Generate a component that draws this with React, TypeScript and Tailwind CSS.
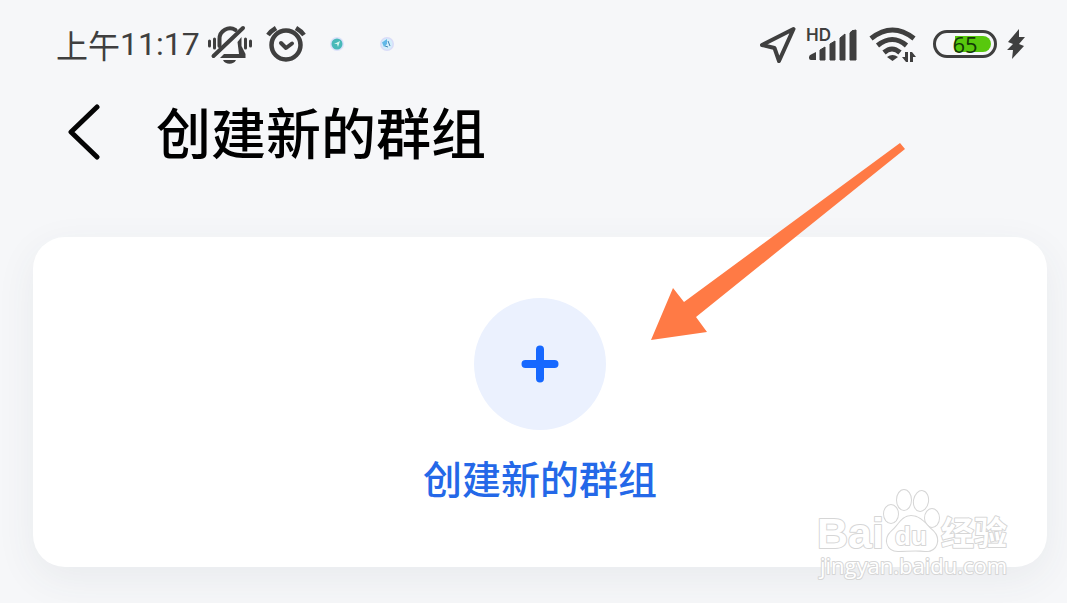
const cjk = "font-['Noto_Sans_CJK_SC','Noto_Sans',sans-serif]";

const BellOffIcon = () => (
  <svg viewBox="0 0 46 42" className="h-[42px] w-[46px]" fill="none" stroke="#3f3f3f" strokeLinecap="round">
    <path d="M1.500 18v5M6.500 16v9M37.500 16v9M42.500 18v5" strokeWidth="3" />
    <path d="M11.500 23v-7a10.500 10.500 0 0 1 16-9" strokeWidth="4" />
    <path d="M29.500 19l4-5v9l4 8v4H12l4-4h15z" fill="#3f3f3f" stroke="none" />
    <path d="M15 37h13c-2 5-11 5-13 0z" fill="#3f3f3f" stroke="none" />
    <path d="M35 5 5.500 33" strokeWidth="4" />
  </svg>
);

const AlarmIcon = () => (
  <svg viewBox="0 0 40 38" className="h-[38px] w-10" fill="none" stroke="#3f3f3f" strokeLinecap="round" strokeLinejoin="round">
    <circle cx="20" cy="20" r="14.500" strokeWidth="4.500" />
    <path d="m15 18 5 5 6-4.500" strokeWidth="4" />
    <path d="m2 10q3-4 8-7M38 10q-3-4-8-7" strokeWidth="4.500" strokeLinecap="butt" />
  </svg>
);

const AppDots = () => (
  <div className="flex gap-9">
    <svg viewBox="0 0 14 14" className="size-3.5">
      <circle cx="7" cy="7" r="7" fill="#dbe1fa" />
      <circle cx="7" cy="7" r="5.500" fill="#48b9b9" />
      <path d="m4 7 6-3-2 6-1-3z" fill="#d5f5ee" />
    </svg>
    <svg viewBox="0 0 14 14" className="size-3.5">
      <circle cx="7" cy="7" r="7" fill="#d9dcf8" />
      <circle cx="7" cy="7" r="5.500" fill="#d4eefb" />
      <path d="M2 5.500 7 2v5L4 10z" fill="#62b8e8" />
      <path d="m8 4 2 5M5 9l3 1" stroke="#4285b8" />
    </svg>
  </div>
);

const LocationIcon = () => (
  <svg viewBox="0 0 38 38" className="size-[38px]" fill="none" stroke="#3f3f3f" strokeWidth="4" strokeLinejoin="round">
    <path d="M34.500 4 3 20l12.500 3L20 36z" />
  </svg>
);

const SignalIcon = () => (
  <svg viewBox="0 0 52 38" className="h-[38px] w-[52px] overflow-visible" fill="#3f3f3f">
    <text x="1" y="16" fontSize="17" fontWeight="600" fontFamily="Inter, sans-serif">HD</text>
    <path d="M4 32q0-2 3-3l4-2v8H6q-2 0-2-2z" />
    <path d="m15 25 5-3v13h-5zM25 19l5-3v19h-5zM35 13l5-4v26h-5zM45 8q1-3 6-3v30h-6z" stroke="#3f3f3f" strokeWidth="1" strokeLinejoin="round" />
  </svg>
);

const WifiIcon = () => (
  <svg viewBox="0 0 48 38" className="h-[38px] w-12" fill="none" stroke="#3f3f3f" strokeWidth="5">
    <path d="M2 13.500q21.500-17 43 0M8.500 20.500q15-12 29 0M15 27.500q8-7 16 0" />
    <path d="M18 32q5.500-4 11 0l-5.500 4z" fill="#3f3f3f" stroke="none" />
    <path d="M36 27h3v10h-2l-4-5h3zM41 37h3v-5h3l-4-5h-2z" fill="#3f3f3f" stroke="none" />
  </svg>
);

const Battery = () => (
  <div className="relative flex h-7 w-16 items-center rounded-full border-3 border-[#3f3f3f] p-[3px]">
    <div className="ml-auto h-full w-9 rounded-r-full bg-[#58c80d]" />
    <span className="absolute inset-0 flex items-center justify-center font-['Open_Sans',sans-serif] text-[22px] leading-5 text-[#123808]">
      65
    </span>
  </div>
);

const ArrowPointer = () => (
  <svg
    viewBox="0 0 256 198"
    className="pointer-events-none absolute right-[140px] bottom-[227px] h-[198px] w-[256px]"
    fill="#ff7a45"
  >
    <path d="M249 1 33 160 22 146 0 198l56-8-11-15L254 7z" />
  </svg>
);

const Watermark = () => (
  <svg
    viewBox="0 0 200 100"
    className="pointer-events-none absolute right-[34px] -bottom-[16px] h-[100px] w-[200px]"
    fill="#fff"
    stroke="#d6d6d6"
    strokeWidth="2"
    strokeLinejoin="round"
    paintOrder="stroke"
  >
    <g fontFamily="'Liberation Sans', 'Noto Sans CJK SC', sans-serif" fontWeight="700">
      <text x="4" y="65" fontSize="43">Bai</text>
      <text x="128" y="62" fontSize="33" fontFamily="'Noto Sans CJK SC', sans-serif">经验</text>
    </g>
    <ellipse cx="78" cy="31" rx="7" ry="9" />
    <ellipse cx="91" cy="17" rx="7" ry="10" />
    <ellipse cx="108" cy="18" rx="7" ry="10" transform="rotate(10 108 18)" />
    <ellipse cx="119" cy="35" rx="7" ry="9" />
    <path d="M98 33c-9 0-12 9-19 15-9 8-5 20 6 20 9 0 17-1 27 0 12 1 16-12 8-20-7-6-12-15-22-15z" />
    <text x="82" y="62" fontSize="26" fontWeight="700" fontFamily="'Liberation Sans', sans-serif">du</text>
    <text x="7" y="91" fontSize="22" fontFamily="'Open Sans', sans-serif">jingyan.baidu.com</text>
  </svg>
);

const StatusBar = () => (
  <div className="flex h-[88px] items-center justify-between pr-10 pl-14 text-[#3f3f3f]">
    <div className="flex items-center">
      <span className="mr-2 flex items-center text-[32px] leading-10">
        上午<span className="font-['Roboto',sans-serif]">11:17</span>
      </span>
      <BellOffIcon />
      <div className="mr-6 ml-3 flex">
        <AlarmIcon />
      </div>
      <AppDots />
    </div>
    <div className="flex items-center">
      <LocationIcon />
      <div className="mr-3 ml-2 flex">
        <SignalIcon />
      </div>
      <WifiIcon />
      <div className="mr-2 ml-4">
        <Battery />
      </div>
      <svg viewBox="0 0 22 32" className="h-8 w-[22px]" fill="#3f3f3f">
        <path d="M14 1 3 14l5 2-6 6h6L7 31 19 18l-5-2 6-7h-6z" />
      </svg>
    </div>
  </div>
);

const App = () => {
  return (
    <div className={`min-h-screen overflow-hidden bg-[#f6f7f9] ${cjk}`}>
      <StatusBar />

      <header className="flex items-start pt-4 pl-[66px]">
        <button type="button" aria-label="返回" className="mr-14">
          <svg viewBox="0 0 34 58" className="h-[58px] w-[34px]" fill="none" stroke="#050505" strokeWidth="5" strokeLinecap="round" strokeLinejoin="round">
            <path d="M31 3 5 28l26 25" />
          </svg>
        </button>
        <h1 className="text-[55px] leading-[52px] font-medium text-black">创建新的群组</h1>
      </header>

      <main className="pt-[75px] pr-5 pb-9 pl-[33px]">
        <section className="relative rounded-[32px] bg-white pt-[61px] pb-[63px] shadow-[0_12px_40px_rgba(60,70,90,0.07)]">
          <button type="button" className="mx-auto flex flex-col items-center gap-5 text-[#2468e8]">
            <span className="flex size-33 items-center justify-center rounded-full bg-[#ebf1fe]">
              <svg viewBox="0 0 38 38" className="size-[38px]" stroke="#1668ff" strokeWidth="8" strokeLinecap="round">
                <path d="M19 4.500v29M4.500 19h29" />
              </svg>
            </span>
            <span className="text-[39px] leading-[54px] font-medium">创建新的群组</span>
          </button>
          <ArrowPointer />
          <Watermark />
        </section>
      </main>
    </div>
  );
};

export default App;
